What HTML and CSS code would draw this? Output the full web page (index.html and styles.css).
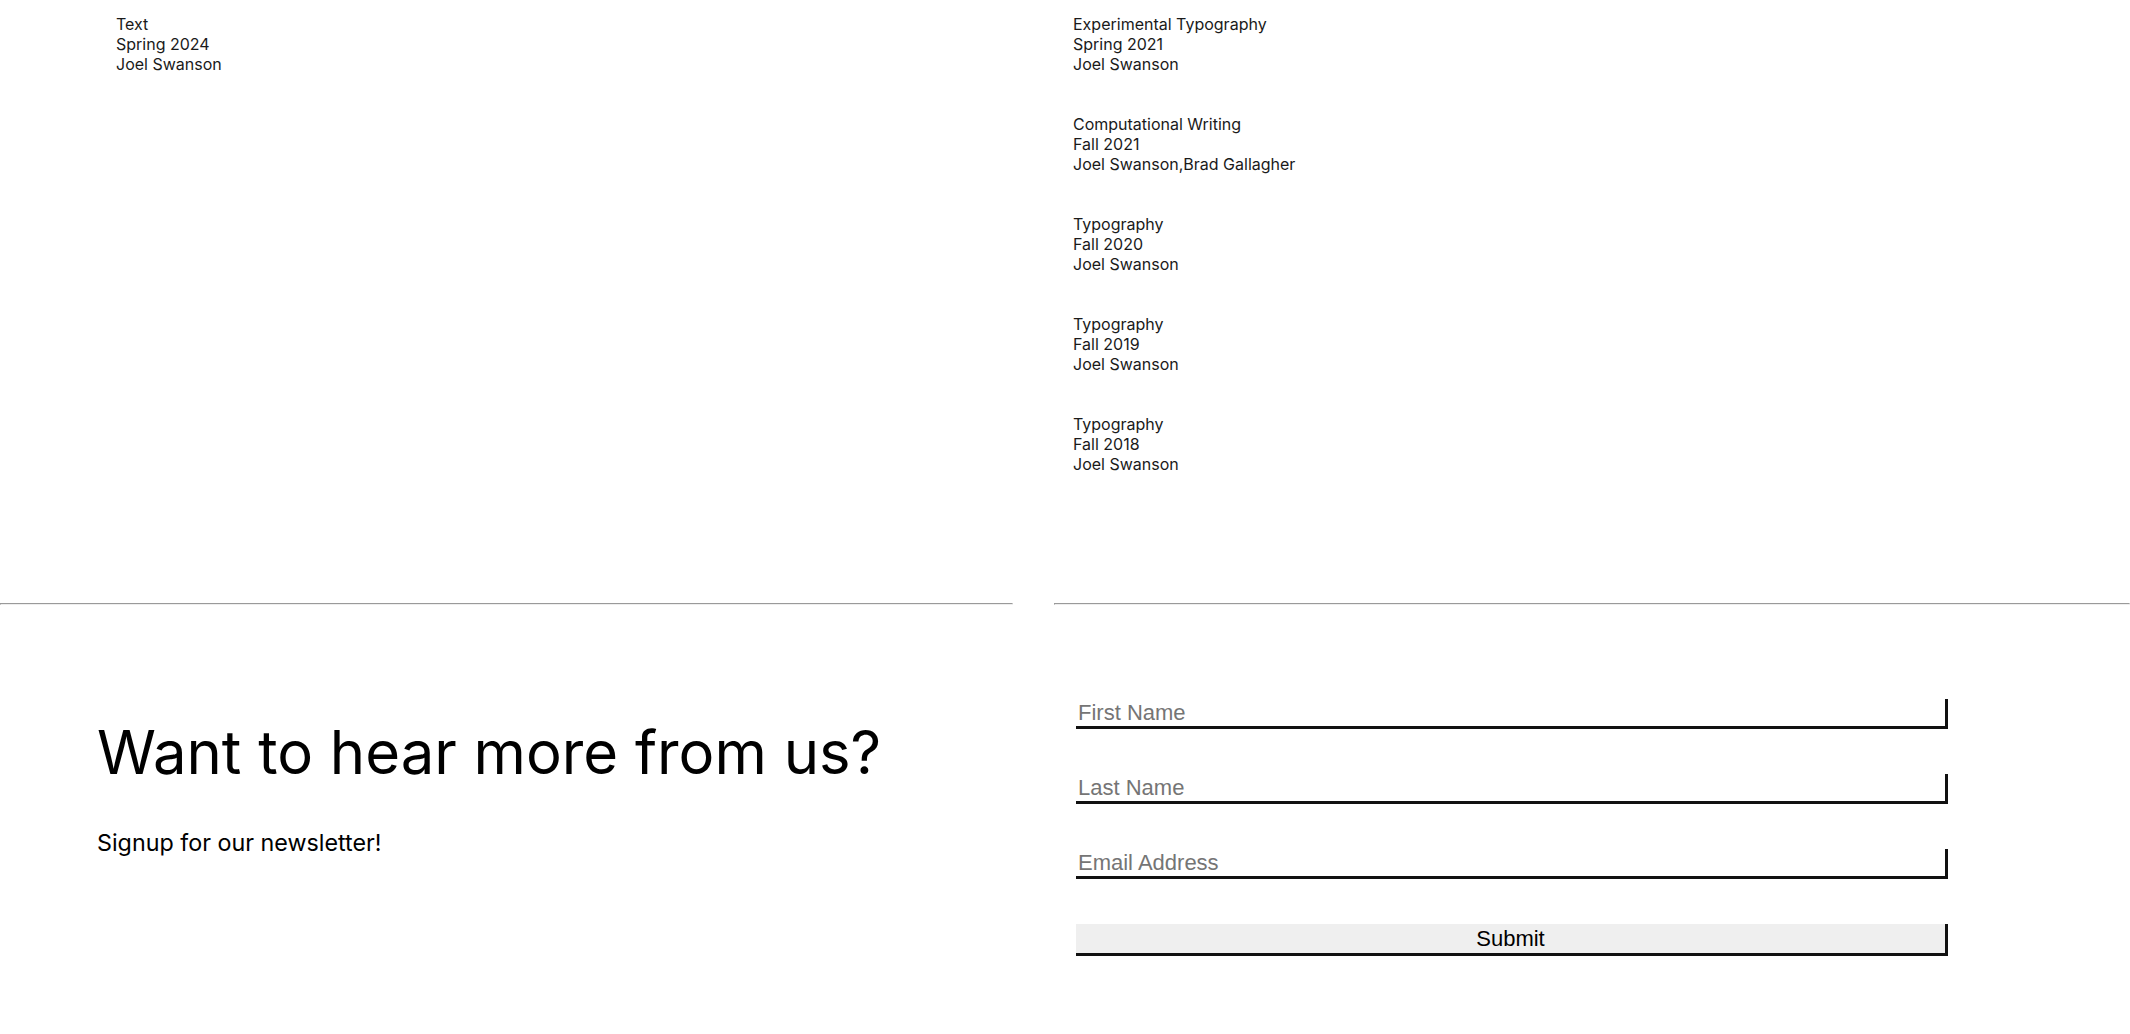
FILE: index.html
```html
<!DOCTYPE html>
<html lang="en">
<head>
<meta charset="utf-8">
<title>Courses</title>
<link rel="stylesheet" href="styles.css">
</head>
<body>
<main class="page">
  <section class="courses">
    <div class="col col-left">
      <div class="course">
        <div>Text</div>
        <div>Spring 2024</div>
        <div>Joel Swanson</div>
      </div>
    </div>
    <div class="col col-right">
      <div class="course">
        <div>Experimental Typography</div>
        <div>Spring 2021</div>
        <div>Joel Swanson</div>
      </div>
      <div class="course">
        <div>Computational Writing</div>
        <div>Fall 2021</div>
        <div>Joel Swanson,Brad Gallagher</div>
      </div>
      <div class="course">
        <div>Typography</div>
        <div>Fall 2020</div>
        <div>Joel Swanson</div>
      </div>
      <div class="course">
        <div>Typography</div>
        <div>Fall 2019</div>
        <div>Joel Swanson</div>
      </div>
      <div class="course">
        <div>Typography</div>
        <div>Fall 2018</div>
        <div>Joel Swanson</div>
      </div>
    </div>
  </section>
  <div class="dividers">
    <hr class="rule">
    <hr class="rule">
  </div>
  <section class="newsletter">
    <div class="news-text">
      <h2 class="news-title">Want to hear more from us?</h2>
      <p class="news-sub">Signup for our newsletter!</p>
    </div>
    <form class="news-form">
      <input class="field" type="text" placeholder="First Name">
      <input class="field" type="text" placeholder="Last Name">
      <input class="field" type="email" placeholder="Email Address">
      <button class="field submit" type="button">Submit</button>
    </form>
  </section>
</main>
</body>
</html>
```
FILE: styles.css
```css
html, body {
  margin: 0;
  padding: 0;
  background: #ffffff;
}

body {
  font-family: Inter, "Noto Sans", sans-serif;
  color: #1a1a1a;
}

.courses,
.dividers,
.newsletter {
  display: grid;
  grid-template-columns: 1013px 1fr;
  column-gap: 41px;
}

.courses {
  padding-top: 14px;
  padding-bottom: 89px;
  font-size: 16px;
  line-height: 20px;
}

.col-left {
  padding-left: 116px;
}

.col-right {
  padding-left: 19px;
}

.course {
  margin-bottom: 40px;
}

.rule {
  margin: 0;
  border-style: inset;
  border-width: 1px;
  color: gray;
}

.news-text {
  padding-left: 97px;
  padding-top: 111px;
}

.news-title {
  margin: 0;
  font-size: 59.8px;
  line-height: 72px;
  font-weight: 400;
  color: #000;
}

.news-sub {
  margin: 40px 0 0;
  font-size: 23.3px;
  line-height: 30px;
  color: #000;
}

.news-form {
  padding-left: 22px;
  padding-top: 94px;
  display: flex;
  flex-direction: column;
  gap: 45px;
}

.field {
  box-sizing: border-box;
  width: 872px;
  height: 30px;
  margin: 0;
  padding: 0 2px;
  border: none;
  border-bottom: 3px solid #111;
  border-right: 3px solid #111;
  background: #fff;
  font-family: "Liberation Sans", Arial, sans-serif;
  font-size: 22px;
  color: #000;
  outline: none;
}

.field::placeholder {
  color: #757575;
}

.submit {
  height: 32px;
  background: #efefef;
  text-align: center;
  cursor: pointer;
}
```
